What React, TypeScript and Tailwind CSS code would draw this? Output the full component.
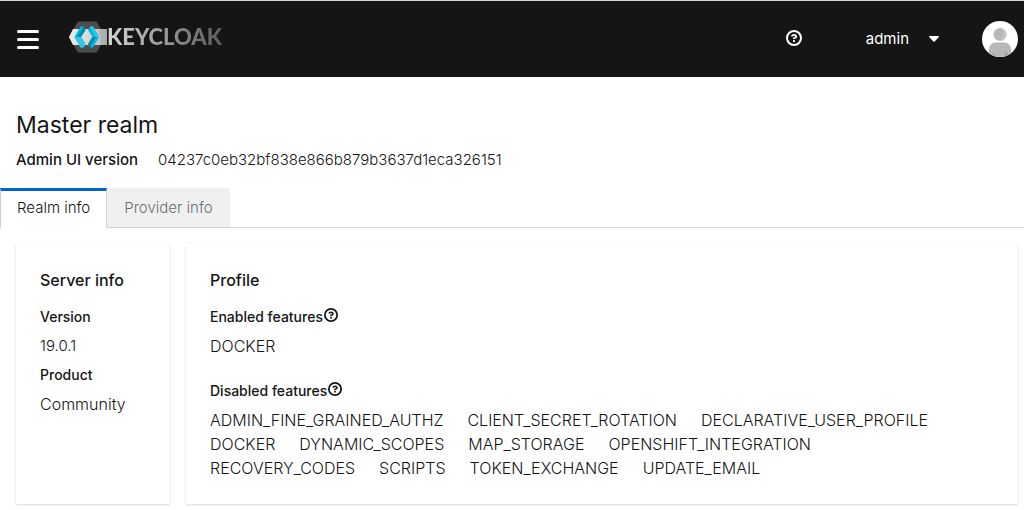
import React from "react";

const enabledFeatures = ["DOCKER"];
const disabledFeatures = [
  "ADMIN_FINE_GRAINED_AUTHZ",
  "CLIENT_SECRET_ROTATION",
  "DECLARATIVE_USER_PROFILE",
  "DOCKER",
  "DYNAMIC_SCOPES",
  "MAP_STORAGE",
  "OPENSHIFT_INTEGRATION",
  "RECOVERY_CODES",
  "SCRIPTS",
  "TOKEN_EXCHANGE",
  "UPDATE_EMAIL",
];

function HelpIcon({ className }: { className: string }) {
  return (
    <svg className={className} viewBox="0 0 1024 1024" fill="currentColor" aria-hidden="true">
      <path d="M521.3 576C627.5 576 713.7 502 713.7 413.7S627.6 253.6 521.3 253.6C366 253.6 334.5 337.7 329.2 407.2c0 7.100 6 8.800 14.300 8.800H445c5.500 0 13-.5 15.800-9.500 0-43.900 122.100-49.400 122.100 7.100 0 28.300-26.700 57.300-61.600 59.400s-74 6.800-74 48.700v32.100c0 17 8.800 22.200 24.700 22.200zM575.300 751.300v-96c0-9.400-8.900-15.300-18-15.300h-90.600c-8.700 0-18 6.400-18 15.400v96c0 9.400 8.200 16.600 18 16.600h90.600c9.300 0 18-7.600 18-16.700z" />
      <path
        fillRule="evenodd"
        d="M512 0a512 512 0 1 0 0 1024A512 512 0 0 0 512 0zM512 128a384 384 0 1 1 0 768 384 384 0 0 1 0-768z"
      />
    </svg>
  );
}

function Logo() {
  return (
    <a href="#home" aria-label="Keycloak" className="mb-1 ml-[30px] flex items-center">
      <svg className="h-8 w-[38px]" viewBox="0 0 38 32" aria-hidden="true">
        <defs>
          <linearGradient id="band" x1="0" x2="1" y1="0" y2="0">
            <stop offset="0" stopColor="#ededed" />
            <stop offset="0.6" stopColor="#d4d4d4" />
            <stop offset="1" stopColor="#b4b4b4" />
          </linearGradient>
        </defs>
        <path d="M9 .5h18.500l9 15.500-9 15.500H9L0 16z" fill="#4d4d4d" />
        <path d="M4 8h34v16H4L0 16z" fill="url(#band)" />
        <path d="M30 8h8v16h-6z" fill="#9c9c9c" opacity="0.4" />
        <path d="M11.500 5.500h3L16.500 9 12 16l4.500 7-2 3.500h-3L5.500 16z" fill="#00b8e3" />
        <path d="M5.500 16H12l4.500 7-2 3.500h-3z" fill="#33c6e9" />
        <path d="M14.500 5.500L16.500 9 12 16H8.500z" fill="#008aaa" />
        <path d="M24 5.500h-3L19 9l4.500 7-4.500 7 2 3.500h3L30 16z" fill="#00b8e3" />
        <path d="M24 5.500h-3L27 16h3z" fill="#33c6e9" />
        <path d="M23.500 16L19 23l2 3.500L27 16z" fill="#008aaa" />
      </svg>
      <span className="bg-linear-to-r from-[#d6d6d6] to-[#5c5c5c] bg-clip-text font-[Lato] text-[22px] leading-8 font-black text-transparent">
        KEYCLOAK
      </span>
    </a>
  );
}

function FeatureList({ title, items }: { title: string; items: string[] }) {
  return (
    <div>
      <dt className="flex h-6 items-center text-sm font-medium">
        {title}
        <button type="button" aria-label={`Help for ${title.toLowerCase()}`} className="mb-1 ml-px">
          <HelpIcon className="size-[14px]" />
        </button>
      </dt>
      <dd className="mt-[5px]">
        <ul className="flex flex-wrap gap-x-6 pr-6 text-base">
          {items.map((item) => (
            <li key={item}>{item}</li>
          ))}
        </ul>
      </dd>
    </div>
  );
}

export default function App() {
  return (
    <div className="min-h-screen bg-white font-[Inter,sans-serif] text-[15px] leading-6 font-light text-[#151515]">
      <header className="flex h-[77px] items-center border-t border-[#d2dcdc] bg-[#151515] pr-[6px] pl-[17px] text-white">
        <button type="button" aria-label="Global navigation" className="flex w-[22px] flex-col gap-[5px]">
          <span className="h-[3px] rounded-xs bg-white" />
          <span className="h-[3px] rounded-xs bg-white" />
          <span className="h-[3px] rounded-xs bg-white" />
        </button>
        <Logo />
        <button type="button" aria-label="Help" className="mb-[2px] ml-auto">
          <HelpIcon className="size-4" />
        </button>
        <button type="button" className="ml-16 flex items-center gap-5 font-normal">
          admin
          <svg className="h-[6px] w-[10px]" viewBox="0 0 10 6" fill="currentColor" aria-hidden="true">
            <path d="M.8 0h8.400c.7 0 1 .8.5 1.300L5.600 5.500a.9.900 0 0 1-1.200 0L.3 1.300C-.2.800.100 0 .8 0z" />
          </svg>
        </button>
        <svg className="ml-[43px] size-9" viewBox="0 0 36 36" role="img" aria-label="Avatar">
          <defs>
            <clipPath id="avatar">
              <circle cx="18" cy="18" r="18" />
            </clipPath>
          </defs>
          <g clipPath="url(#avatar)">
            <path d="M0 0h36v36H0z" fill="#fff" />
            <circle cx="18" cy="13.500" r="6.500" fill="#b8b8b8" />
            <path d="M20 7.300a6.500 6.500 0 0 1-3 12.600 9 9 0 0 0 3-12.600z" fill="#c6c6c6" />
            <path d="M7 36v-7c0-5 3-7.500 7-7.500h8c4 0 7 2.500 7 7.500v7z" fill="#b8b8b8" />
            <path d="M11 36l1-6 1 6zM23 36v-6l4 4v2z" fill="#a3a3a3" />
          </g>
        </svg>
      </header>

      <main>
        <section className="px-4 pt-8">
          <h1 className="text-[23px] leading-8 font-normal">Master realm</h1>
          <dl className="mt-[7px] flex gap-5">
            <dt className="font-medium">Admin UI version</dt>
            <dd>04237c0eb32bf838e866b879b3637d1eca326151</dd>
          </dl>
        </section>

        <div role="tablist" className="mt-4 flex h-10 border-b border-[#d2d2d2]">
          <button
            type="button"
            role="tab"
            aria-selected="true"
            className="-mb-px border-x border-t-3 border-x-[#d2d2d2] border-t-[#06c] bg-white px-4 pb-[3px]"
          >
            Realm info
          </button>
          <button type="button" role="tab" aria-selected="false" className="bg-[#f0f0f0] px-[17px] text-[#6a6e73]">
            Provider info
          </button>
        </div>

        <div className="flex gap-4 py-4 pr-[6px] pl-4">
          <section className="w-[154px] shrink-0 p-6 shadow-[0_1px_2px_0_rgba(3,3,3,0.12),0_0_2px_0_rgba(3,3,3,0.06)]">
            <h2 className="text-base font-medium">Server info</h2>
            <dl className="mt-[13px]">
              <dt className="text-sm leading-6 font-medium">Version</dt>
              <dd className="mt-[5px]">19.0.1</dd>
              <dt className="mt-[5px] text-sm leading-6 font-medium">Product</dt>
              <dd className="mt-[5px] text-base">Community</dd>
            </dl>
          </section>
          <section className="min-w-0 grow p-6 shadow-[0_1px_2px_0_rgba(3,3,3,0.12),0_0_2px_0_rgba(3,3,3,0.06)]">
            <h2 className="text-base font-medium">Profile</h2>
            <dl className="mt-[13px] flex flex-col gap-[21px]">
              <FeatureList title="Enabled features" items={enabledFeatures} />
              <FeatureList title="Disabled features" items={disabledFeatures} />
            </dl>
          </section>
        </div>
      </main>
    </div>
  );
}
